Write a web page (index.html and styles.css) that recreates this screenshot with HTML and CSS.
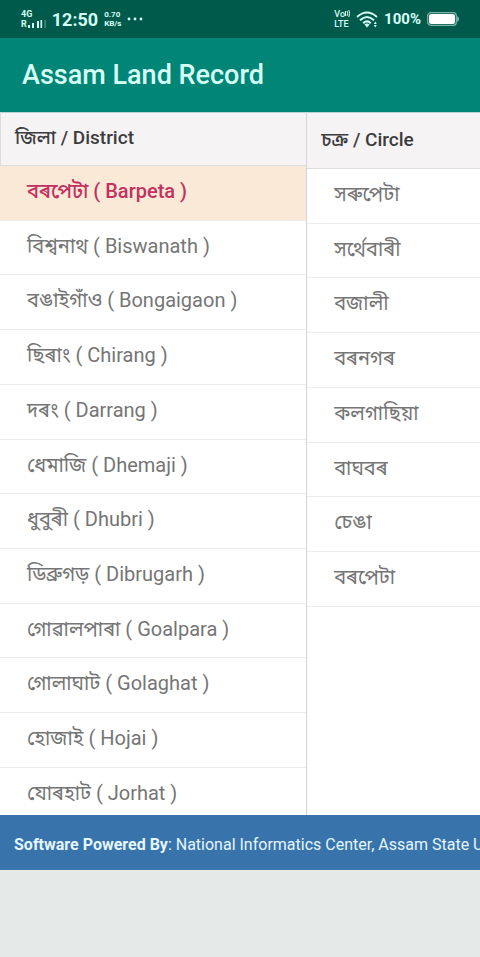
FILE: index.html
```html
<!DOCTYPE html>
<html lang="as">
<head>
    <meta charset="UTF-8">
    <meta name="viewport" content="width=device-width, initial-scale=1.0">
    <title>Assam Land Record</title>
    <link rel="stylesheet" href="styles.css">
</head>
<body>

<div class="status-bar">
    <div class="status-group">
        <div class="network">
            <span>4G</span>
            <div class="roaming">
                <span>R</span>
                <svg width="18" height="8" viewBox="0 0 18 8">
                    <path fill="#d5fff4" d="M0 5h2v3H0zM4 3h2v5H4zM9 1h2v7H9z"/>
                    <path fill="#d5fff4" d="M12.5 0h1.6v8h-1.6z"/>
                    <path fill="#3d8878" d="M16.4 0H18v8h-1.6z"/>
                </svg>
            </div>
        </div>
        <span class="clock">12:50</span>
        <div class="speed"><span>0.70</span><span>KB/s</span></div>
        <svg class="dots" width="16" height="4" viewBox="0 0 16 4" fill="#d5fff4">
            <circle cx="2" cy="2" r="1.4"/>
            <circle cx="8" cy="2" r="1.4"/>
            <circle cx="14" cy="2" r="1.4"/>
        </svg>
    </div>
    <div class="status-group">
        <div class="volte">
            <span>Vo<svg width="5" height="7" viewBox="0 0 5 7" fill="none" stroke="#d5fff4"><path d="M.5 1v5M2 1q1.4 2.5 0 5M3.8 0q1.6 3.5 0 7"/></svg></span>
            <span>LTE</span>
        </div>
        <svg class="wifi" width="22" height="17" viewBox="0 0 22 17" fill="none" stroke="#d5fff4" stroke-width="2">
            <path d="M1 6Q11-3 21 6M4 9.2Q11 2.8 18 9.2M7.2 12.2Q11 8.6 14.8 12.2"/>
            <path fill="#d5fff4" stroke="none" d="M8.4 13.6Q11 11.6 13.6 13.6L11 16.4zM17.8 13h3L19.3 10.5zM17.8 14h3L19.3 16.5z"/>
        </svg>
        <span class="percent">100%</span>
        <svg width="33" height="14" viewBox="0 0 33 14">
            <rect x=".7" y=".7" width="28.6" height="12.6" rx="3" fill="none" stroke="#7fb8ab" stroke-width="1.2"/>
            <rect x="2" y="2" width="26" height="10" rx="2" fill="#fff"/>
            <path d="M30.5 4q2.4 3 0 6z" fill="#d5fff4"/>
        </svg>
    </div>
</div>

<header class="app-bar">
    <h1>Assam Land Record</h1>
</header>

<main class="columns">
    <section class="column district">
        <h2>জিলা / District</h2>
        <nav class="list">
            <a href="#" class="active">বৰপেটা ( Barpeta )</a>
            <a href="#">বিশ্বনাথ ( Biswanath )</a>
            <a href="#">বঙাইগাঁও ( Bongaigaon )</a>
            <a href="#">ছিৰাং ( Chirang )</a>
            <a href="#">দৰং ( Darrang )</a>
            <a href="#">ধেমাজি ( Dhemaji )</a>
            <a href="#">ধুবুৰী ( Dhubri )</a>
            <a href="#">ডিব্ৰুগড় ( Dibrugarh )</a>
            <a href="#">গোৱালপাৰা ( Goalpara )</a>
            <a href="#">গোলাঘাট ( Golaghat )</a>
            <a href="#">হোজাই ( Hojai )</a>
            <a href="#">যোৰহাট ( Jorhat )</a>
        </nav>
    </section>
    <section class="column circle">
        <h2>চক্ৰ / Circle</h2>
        <nav class="list">
            <a href="#">সৰুপেটা</a>
            <a href="#">সৰ্থেবাৰী</a>
            <a href="#">বজালী</a>
            <a href="#">বৰনগৰ</a>
            <a href="#">কলগাছিয়া</a>
            <a href="#">বাঘবৰ</a>
            <a href="#">চেঙা</a>
            <a href="#">বৰপেটা</a>
        </nav>
    </section>
</main>

<footer class="footer">
    <p><strong>Software Powered By</strong>: National Informatics Center, Assam State U</p>
</footer>

</body>
</html>
```

FILE: styles.css
```css
* {
    box-sizing: border-box;
}
body {
    display: flex;
    flex-direction: column;
    height: 100vh;
    margin: 0;
    padding-bottom: 87px;
    background-color: #e5e9e8;
    font-family: Roboto, "Noto Sans Bengali", "Noto Sans", sans-serif;
    overflow: hidden;
}

/* status bar */
.status-bar {
    display: flex;
    flex: none;
    justify-content: space-between;
    align-items: center;
    height: 38px;
    padding: 0 20px 0 21px;
    background-color: #005a4c;
    color: #d5fff4;
}
.status-group {
    display: flex;
    align-items: center;
    gap: 6px;
}
.network,
.speed,
.volte {
    display: flex;
    flex-direction: column;
    font-size: 9px;
    line-height: 10px;
    font-weight: 700;
}
.volte {
    font-weight: 500;
}
.roaming {
    display: flex;
    align-items: center;
    gap: 1px;
}
.clock {
    font-size: 18px;
    font-weight: 700;
}
.speed {
    font-size: 8px;
    line-height: 9px;
}
.percent {
    font-size: 15px;
    font-weight: 700;
}

/* title */
.app-bar {
    flex: none;
    padding: 22px;
    background-color: #008577;
    color: #d5fff4;
}
.app-bar h1 {
    margin: 0;
    font-size: 27px;
    line-height: 30px;
    font-weight: 500;
}

/* lists */
.columns {
    display: flex;
    flex: 1;
    min-height: 0;
    overflow: hidden;
    background-color: #fff;
}
.column {
    overflow: hidden;
}
.district {
    width: 64%;
    border-right: 1px solid #d5d5d8;
}
.circle {
    flex: 1;
}
.column h2 {
    margin: 0;
    padding: 13px 14px 15px;
    border: 1px solid #ddd;
    border-top-color: #b5d5d1;
    border-right: none;
    background-color: #f6f3f4;
    color: #3c3c3e;
    font-size: 19px;
    line-height: 24px;
    font-weight: 500;
}
.circle h2 {
    padding: 15px 14px 16px;
    border-left: none;
}
.list {
    display: grid;
    grid-auto-rows: 11.4vw;
}
.list a {
    padding: 12px 27px;
    border-bottom: 1px solid #ececec;
    color: #757575;
    font-size: 20px;
    line-height: 26px;
    text-decoration: none;
    white-space: nowrap;
}
.list .active {
    background-color: #fbe9d7;
    color: #c2315f;
    font-weight: 500;
}

/* footer */
.footer {
    flex: none;
    padding: 20px 14px 16px;
    background-color: #3873ab;
    color: #e4f6ff;
    overflow: hidden;
}
.footer p {
    margin: 0;
    font-size: 16px;
    line-height: 19px;
    white-space: nowrap;
}
```
